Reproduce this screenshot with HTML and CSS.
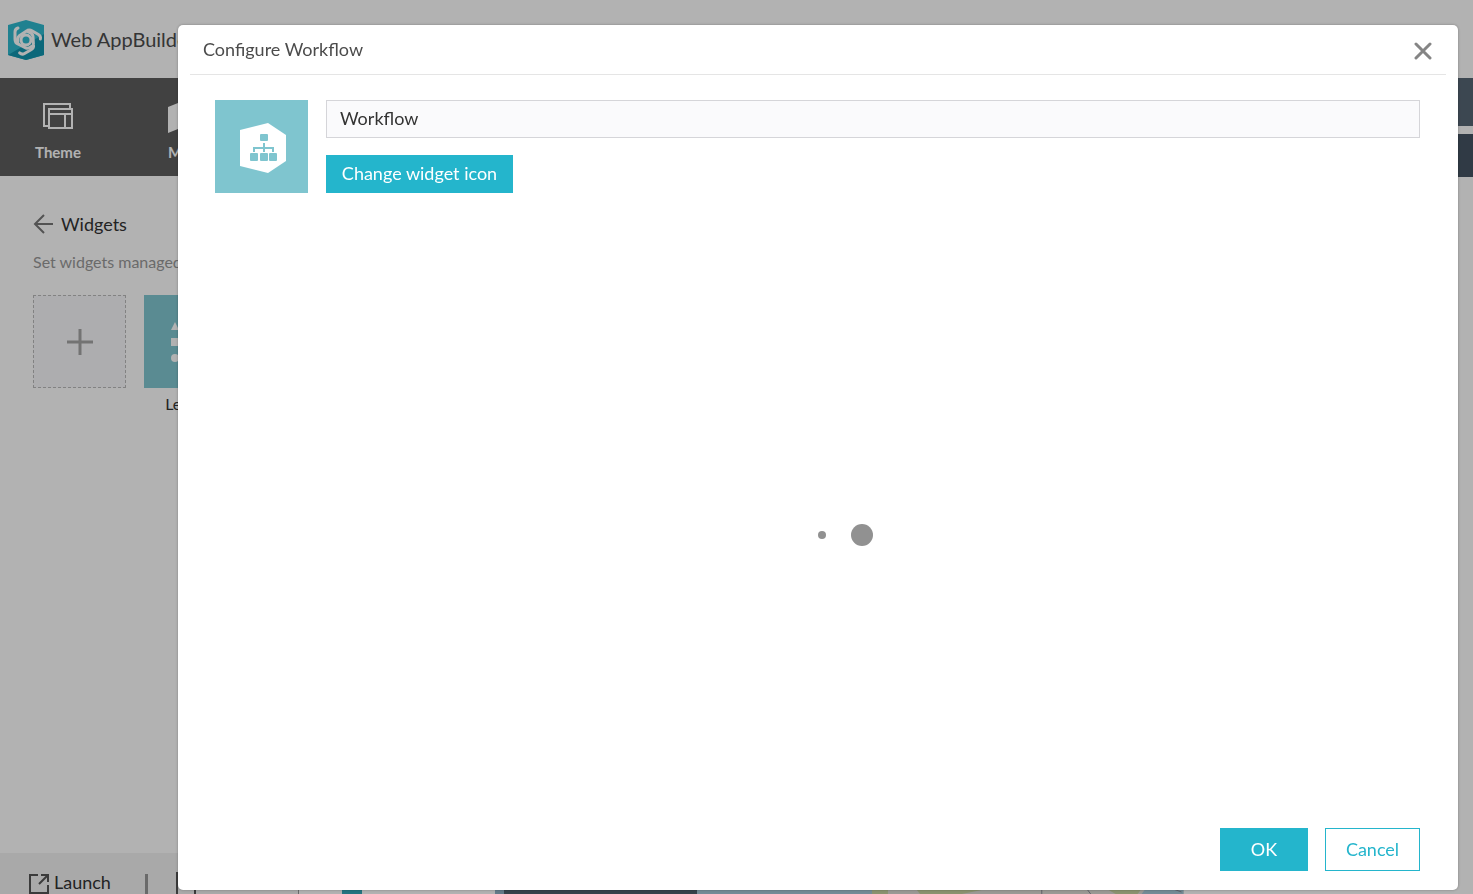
FILE: index.html
```
<!DOCTYPE html>
<html lang="en">
<head>
  <meta charset="utf-8">
  <title>Web AppBuilder</title>
  <link rel="stylesheet" href="styles.css">
</head>
<body>
  <div class="app">
    <header class="header">
      <svg class="logo" viewBox="0 0 36 40" width="36" height="40">
        <path d="M18 0 36 5V35L18 40 0 35V5z" fill="#2fb9cf"/>
        <path d="M36 5V35L18 40 0 35 36 14z" fill="#1296af"/>
        <g fill="none" stroke="#fff" stroke-width="3" stroke-linecap="round">
          <circle cx="18" cy="20" r="5"/>
          <path id="arm" d="M10 8Q7 9 7 12V19Q7 23 10 24L18 28Q21 29 24 26"/>
          <use href="#arm" transform="rotate(120 18 20)"/>
          <use href="#arm" transform="rotate(240 18 20)"/>
        </g>
      </svg>
      <span class="title">Web AppBuilder</span>
    </header>
    <div class="content">
      <aside class="sidebar">
        <nav class="tabs">
          <a class="tab" href="#theme">
            <svg viewBox="0 0 30 26" width="30" height="26" fill="none" stroke="#fff" stroke-width="2">
              <path d="M5 23H1V1H27V5M6 6H29V25H6zM6 11H29M22 11V25"/>
            </svg>
            <span>Theme</span>
          </a>
          <a class="tab" href="#map">
            <svg viewBox="0 0 30 30" width="30" height="30" fill="#fff">
              <path d="M0 4 10 0 20 4 30 0V26L20 30 10 26 0 30z"/>
            </svg>
            <span>Map</span>
          </a>
        </nav>
        <div class="panel">
          <h2 class="panel-title">
            <a href="#back" aria-label="Back">
              <svg viewBox="0 0 20 20" width="20" height="20" fill="none" stroke="#777" stroke-width="2">
                <path d="M20 10H2M11 1 2 10 11 19"/>
              </svg>
            </a>
            Widgets
          </h2>
          <p class="hint">Set widgets managed by the controller</p>
          <div class="widgets">
            <button class="add" type="button" aria-label="Add widget">
              <svg viewBox="0 0 26 26" width="26" height="26" stroke="#a5a5a5" stroke-width="3">
                <path d="M13 0V26M0 13H26"/>
              </svg>
            </button>
            <div class="widget">
              <div class="thumb">
                <svg viewBox="0 0 40 40" width="40" height="40" fill="#fff">
                  <path d="M0 8 4 0 8 8zM0 16H8V24H0zM14 2H40V6H14zM14 18H40V22H14zM14 34H40V38H14z"/>
                  <circle cx="4" cy="36" r="4"/>
                </svg>
              </div>
              <span>Legend</span>
            </div>
          </div>
        </div>
        <footer class="footer">
          <a class="launch" href="#launch">
            <svg viewBox="0 0 20 20" width="20" height="20" fill="none" stroke="#555" stroke-width="2">
              <path d="M9 1H1V19H19V11M12 1H19V8M19 1 10 10"/>
            </svg>
            <span>Launch</span>
          </a>
          <span class="divider"></span>
          <a href="#previews" aria-label="Previews">
            <svg viewBox="0 0 20 24" width="20" height="24" fill="none" stroke="#555" stroke-width="2">
              <path d="M1 1H19V23H1z"/>
            </svg>
          </a>
        </footer>
      </aside>
      <main class="preview">
        <div class="map-tools">
          <span></span>
          <span></span>
        </div>
        <div class="map-strip">
          <span class="marker"></span>
          <div class="map">
            <div class="map-title"></div>
            <div class="water"></div>
            <svg class="land" viewBox="0 0 312 8" preserveAspectRatio="none">
              <path d="M0 0H312V8H0z" fill="#dedcd6"/>
              <path d="M0 0H20L32 3 16 4V8H0zM42 0H104L110 4 90 8H48zM230 0H272L266 8H244z" fill="#c7d2a0"/>
              <path d="M276 0H312V8H270z" fill="#a6c8d8"/>
              <path d="M170 0V8M213 0 219 8M286 3 296 1 310 6" fill="none" stroke="#8d8d99"/>
            </svg>
          </div>
        </div>
      </main>
    </div>
  </div>

  <div class="overlay"></div>

  <div class="dialog" role="dialog" aria-labelledby="dialog-title">
    <div class="dialog-header">
      <h1 id="dialog-title">Configure Workflow</h1>
      <button class="close" type="button" aria-label="Close">
        <svg viewBox="0 0 18 18" width="18" height="18" stroke="#858585" stroke-width="3" stroke-linecap="round">
          <path d="M2 2 16 16M16 2 2 16"/>
        </svg>
      </button>
    </div>
    <div class="dialog-body">
      <div class="setting">
        <div class="widget-icon">
          <svg viewBox="0 0 46 50" width="46" height="50">
            <path d="M0 7 28 0 46 12V38L28 50 0 43z" fill="#fff"/>
            <g fill="#7fc5cf">
              <rect x="20" y="11" width="8" height="7" rx="1"/>
              <rect x="10" y="30" width="8" height="8" rx="1"/>
              <rect x="20" y="30" width="8" height="8" rx="1"/>
              <rect x="29" y="30" width="8" height="8" rx="1"/>
            </g>
            <path d="M24 20V29M14 29V25H33V29" fill="none" stroke="#7fc5cf" stroke-width="2"/>
          </svg>
        </div>
        <div class="fields">
          <input type="text" value="Workflow" aria-label="Widget name">
          <button class="btn change" type="button">Change widget icon</button>
        </div>
      </div>
      <div class="loading">
        <span class="dot small"></span>
        <span class="dot"></span>
      </div>
    </div>
    <div class="dialog-footer">
      <button class="btn ok" type="button">OK</button>
      <button class="btn cancel" type="button">Cancel</button>
    </div>
  </div>
</body>
</html>
```
FILE: styles.css
```
* {
  box-sizing: border-box;
}

body {
  margin: 0;
  font-family: Lato, sans-serif;
  font-size: 18px;
  color: #333333;
  overflow: hidden;
}

a {
  color: inherit;
  text-decoration: none;
}

button,
input {
  font: inherit;
}

svg {
  display: block;
  flex: none;
}

.app {
  height: 100vh;
  display: flex;
  flex-direction: column;
}

.header {
  display: flex;
  align-items: center;
  gap: 7px;
  height: 78px;
  padding: 2px 8px 0;
}

.title {
  padding-bottom: 2px;
  font-size: 20px;
  color: #4c4c4c;
}

.content {
  flex: 1;
  display: flex;
  min-height: 0;
}

.sidebar {
  width: 299px;
  display: flex;
  flex-direction: column;
  border-right: 1px solid #999999;
}

.tabs {
  display: flex;
  height: 98px;
  background-color: #5e5e5e;
  overflow: hidden;
}

.tab {
  display: flex;
  flex-direction: column;
  align-items: center;
  justify-content: space-between;
  flex: none;
  width: 116px;
  padding: 25px 0 15px;
  font-size: 15px;
  font-weight: bold;
  color: #ffffff;
}

.tab + .tab {
  width: 134px;
}

.panel {
  flex: 1;
  padding: 36px 0 0 33px;
}

.panel-title {
  display: flex;
  align-items: center;
  gap: 8px;
  margin: 0;
  font-size: 18px;
  line-height: 24px;
  font-weight: normal;
}

.hint {
  margin: 16px 0 23px;
  font-size: 16px;
  line-height: 20px;
  white-space: nowrap;
  color: #999999;
}

.widgets {
  display: flex;
  gap: 18px;
}

.add {
  display: flex;
  align-items: center;
  justify-content: center;
  width: 93px;
  height: 93px;
  background-color: #f8f8fb;
  border: 1px dashed #bbbbbb;
}

.widget {
  width: 93px;
  text-align: center;
  font-size: 16px;
  line-height: 20px;
}

.thumb {
  display: flex;
  align-items: center;
  justify-content: center;
  height: 93px;
  margin-bottom: 6px;
  background-color: #82c8d2;
}

.footer {
  display: flex;
  align-items: center;
  gap: 32px;
  height: 41px;
  padding: 20px 0 0 29px;
  background-color: #f2f2f2;
}

.launch {
  display: flex;
  align-items: center;
  gap: 5px;
  line-height: 20px;
}

.launch span {
  padding-bottom: 3px;
}

.divider {
  width: 3px;
  height: 20px;
  margin-left: 2px;
  background-color: #999999;
}

.footer a:last-child {
  margin-left: -4px;
}

.preview {
  flex: 1;
  display: flex;
  flex-direction: column;
  justify-content: space-between;
}

.map-tools {
  display: flex;
  flex-direction: column;
  align-items: flex-end;
  gap: 8px;
}

.map-tools span {
  width: 60px;
  height: 48px;
  background-color: #576675;
}

.map-tools span:last-child {
  height: 43px;
  background-color: #455463;
}

.map-strip {
  display: flex;
  height: 8px;
}

.marker {
  width: 20px;
  margin: 0 133px 0 43px;
  background-color: #35a7b8;
}

.map {
  flex: 1;
  display: flex;
  margin-right: 289px;
  border-left: 9px solid #8fb0c4;
}

.map-title {
  flex: 193;
  background-color: #4c5f6b;
}

.water {
  flex: 176;
  background-color: #a6c8d8;
}

.land {
  flex: 312;
  min-width: 0;
  height: 8px;
}

.overlay {
  position: fixed;
  inset: 0;
  background-color: rgba(0, 0, 0, 0.3);
}

.dialog {
  position: fixed;
  inset: 25px 15px 4px 178px;
  display: flex;
  flex-direction: column;
  padding: 0 12px;
  background-color: #ffffff;
  border-radius: 5px;
  box-shadow: 0 0 3px rgba(0, 0, 0, 0.3);
}

.dialog-header {
  display: flex;
  align-items: center;
  justify-content: space-between;
  height: 50px;
  padding: 0 14px 0 13px;
  border-bottom: 1px solid #e5e5e5;
}

.dialog-header h1 {
  margin: 0;
  padding-bottom: 2px;
  font-size: 18px;
  font-weight: normal;
  color: #4c4c4c;
}

.close {
  padding: 2px 0 0;
  background: none;
  border: none;
  cursor: pointer;
}

.dialog-body {
  flex: 1;
  display: flex;
  flex-direction: column;
  padding: 25px 26px 0 25px;
}

.setting {
  display: flex;
  gap: 18px;
}

.widget-icon {
  display: flex;
  align-items: center;
  justify-content: center;
  width: 93px;
  height: 93px;
  padding: 2px 0 0 2px;
  background-color: #7fc5cf;
}

.fields {
  flex: 1;
  display: flex;
  flex-direction: column;
  align-items: flex-start;
  justify-content: space-between;
}

.fields input {
  width: 100%;
  height: 38px;
  padding: 0 13px 2px;
  color: #333333;
  background-color: #fafafc;
  border: 1px solid #d5d5d9;
  border-radius: 0;
}

.btn {
  padding: 0 0 2px;
  color: #ffffff;
  background-color: #24b5cc;
  border: 1px solid #24b5cc;
  cursor: pointer;
}

.change {
  width: 187px;
  height: 38px;
}

.loading {
  flex: 1;
  display: flex;
  align-items: center;
  justify-content: center;
  gap: 25px;
  padding: 49px 0 0 56px;
}

.dot {
  width: 22px;
  height: 22px;
  border-radius: 50%;
  background-color: #919191;
}

.dot.small {
  width: 8px;
  height: 8px;
}

.dialog-footer {
  display: flex;
  justify-content: flex-end;
  gap: 17px;
  padding: 0 26px 19px;
}

.dialog-footer .btn {
  height: 43px;
}

.ok {
  width: 88px;
}

.cancel {
  width: 95px;
  color: #24b5cc;
  background-color: #ffffff;
}
```
